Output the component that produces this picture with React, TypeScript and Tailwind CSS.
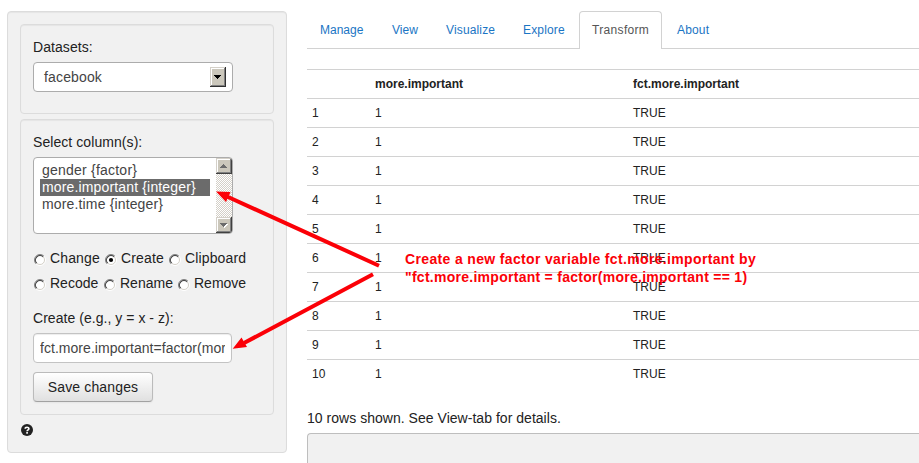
import React from "react";

const tabs = [
  { name: "Manage", width: "w-[70px]" },
  { name: "View", width: "w-[52px]" },
  { name: "Visualize", width: "w-[75px]" },
  { name: "Explore", width: "w-[67px]" },
  { name: "Transform", width: "w-[83px]" },
  { name: "About", width: "w-[60px]" },
];
const rows = [1, 2, 3, 4, 5, 6, 7, 8, 9, 10];

function Well({ className = "", children }: { className?: string; children: React.ReactNode }) {
  return (
    <div className={`rounded-[4px] border border-[#dcdcdc] bg-[#f1f1f1] p-3 shadow-[inset_0_1px_1px_rgba(0,0,0,0.05)] ${className}`}>
      {children}
    </div>
  );
}

function ScrollButton({ up = false }: { up?: boolean }) {
  return (
    <svg width="16" height="16" viewBox="0 0 16 16" shapeRendering="crispEdges" className="block">
      <rect width="16" height="16" fill="#404040" />
      <rect width="15" height="15" fill="#d4d0c8" />
      <rect x="1" y="1" width="14" height="14" fill="#808080" />
      <rect x="1" y="1" width="13" height="13" fill="#fff" />
      <rect x="2" y="2" width="12" height="12" fill="#cbc7bb" />
      {up ? (
        <path d="M7 6h1v1h1v1h1v1h1v1H4V9h1V8h1V7h1z" fill="#6b6b6b" />
      ) : (
        <>
          <path d="M5 7h7v1h-1v1h-1v1H9v1H8v-1H7V9H6V8H5z" fill="#fff" />
          <path d="M4 6h7v1h-1v1H9v1H8v1H7V9H6V8H5V7H4z" fill="#6b6b6b" />
        </>
      )}
    </svg>
  );
}

function Radio({ label, checked = false, className = "" }: { label: string; checked?: boolean; className?: string }) {
  return (
    <div className={`flex shrink-0 items-start gap-1 ${className}`}>
      <svg width="12" height="12" viewBox="0 0 12 12" className="mt-[6px] shrink-0">
        <circle cx="6" cy="6" r="5" fill="#fff" />
        <path d="M2.1 9.9A5.5 5.5 0 0 1 9.9 2.1" fill="none" stroke="#808080" strokeWidth="1" />
        <path d="M2.8 9.2A4.5 4.5 0 0 1 9.2 2.8" fill="none" stroke="#404040" strokeWidth="1.1" />
        <path d="M9.9 2.1A5.5 5.5 0 0 1 2.1 9.9" fill="none" stroke="#fff" strokeWidth="1" />
        <path d="M9.2 2.8A4.5 4.5 0 0 1 2.8 9.2" fill="none" stroke="#d4d0c8" strokeWidth="1" />
        {checked && <circle cx="6" cy="6" r="2.1" fill="#000" />}
      </svg>
      <span>{label}</span>
    </div>
  );
}

function Sidebar() {
  return (
    <aside className="mt-[11px] ml-[7px] h-[442px] w-[280px] shrink-0 rounded-[4px] border border-[#dcdcdc] bg-[#f1f1f1] p-3 shadow-[inset_0_1px_1px_rgba(0,0,0,0.05)]">
      <Well className="h-[90px] w-[254px]">
        <div className="tracking-[0.07px]">Datasets:</div>
        <div className="mt-[5px] flex h-[30px] w-[200px] items-center justify-between rounded-[4px] border border-[#acacac] bg-white pr-[6px] pl-[10px] text-[#444]">
          <span className="tracking-[0.15px]">facebook</span>
          <svg width="16" height="20" viewBox="0 0 16 20" shapeRendering="crispEdges">
            <rect width="16" height="20" fill="#303030" />
            <rect width="15" height="19" fill="#d4d0c8" />
            <rect x="1" y="1" width="14" height="18" fill="#808080" />
            <rect x="1" y="1" width="13" height="17" fill="#fff" />
            <rect x="2" y="2" width="12" height="16" fill="#cbc7bb" />
            <path d="M4 8h7v1h-1v1H9v1H8v1H7v-1H6v-1H5V9H4z" fill="#000" />
          </svg>
        </div>
      </Well>
      <Well className="mt-[5px] h-[296px] w-[254px]">
        <div className="tracking-[0.07px]">Select column(s):</div>
        <div className="mt-[5px] flex h-[77px] w-[200px] justify-between overflow-hidden rounded-[4px] border border-[#acacac] bg-white text-[#444]">
          <div className="mt-[4px] ml-[6px] w-[170px] leading-[17px] tracking-[0.15px]">
            <div className="pl-[2px] tracking-[0.22px]">gender {"{factor}"}</div>
            <div className="bg-[#6b6b6b] pl-[2px] text-white">more.important {"{integer}"}</div>
            <div className="pl-[2px]">more.time {"{integer}"}</div>
          </div>
          <div className="flex w-4 flex-col justify-between bg-[repeating-conic-gradient(#d4d0c8_0_25%,#fff_0_50%)] bg-[length:2px_2px]">
            <ScrollButton up />
            <ScrollButton />
          </div>
        </div>
        <div className="mt-[14px] flex h-5 pl-px tracking-[0.14px]">
          <Radio label="Change" className="w-[71px]" />
          <Radio label="Create" checked className="w-[64px]" />
          <Radio label="Clipboard" />
        </div>
        <div className="mt-[5px] flex h-5 pl-px">
          <Radio label="Recode" className="w-[70px]" />
          <Radio label="Rename" className="w-[74px]" />
          <Radio label="Remove" />
        </div>
        <div className="mt-[15px] tracking-[0.04px]">Create (e.g., y = x - z):</div>
        <div className="mt-[5px] h-[30px] w-[199px] rounded-[4px] border border-[#c3c3c3] bg-white px-[6px] py-[4px] text-[#444] shadow-[inset_0_1px_1px_rgba(0,0,0,0.075)]">
          <div className="overflow-hidden tracking-[0.04px] whitespace-nowrap">fct.more.important=factor(mor</div>
        </div>
        <button className="mt-[9px] block h-[30px] w-[120px] rounded-[4px] border border-[#bbb] border-b-[#a2a2a2] bg-linear-to-b from-white to-[#e0e0e0] text-center tracking-[0.14px] shadow-[0_1px_2px_rgba(0,0,0,0.05)]">
          Save changes
        </button>
      </Well>
      <svg width="12" height="12" viewBox="0 0 14 14" className="mt-[9px] ml-px block">
        <circle cx="7" cy="7" r="7" fill="#222" />
        <path d="M4.9 5.4C4.9 3.2 9.2 3.2 9.2 5.4C9.2 6.8 7.1 6.8 7.1 8.4" fill="none" stroke="#fff" strokeWidth="1.9" />
        <rect x="6.1" y="9.4" width="2" height="1.9" fill="#fff" />
      </svg>
    </aside>
  );
}

function Main() {
  return (
    <main className="mt-[11px] ml-5 min-w-0 flex-1">
      <nav className="flex h-[38px] gap-[2px] border-b border-[#d2d2d2] text-[12px]">
        {tabs.map(({ name, width }) => (
          <div
            key={name}
            className={`${width} shrink-0 ${
              name === "Transform"
                ? "h-[38px] rounded-t-[4px] border border-b-0 border-[#d2d2d2] bg-white pt-[8px] pl-3 tracking-[0.33px] text-[#555]"
                : name === "Visualize" || name === "Explore" || name === "About"
                  ? "pt-[9px] pl-[13px] tracking-[0.15px] text-[#1a75c4]"
                  : "pt-[9px] pl-[13px] text-[#1a75c4]"
            }`}
          >
            {name}
          </div>
        ))}
      </nav>
      <table className="mt-5 w-full table-fixed border-collapse text-left text-[12px]">
        <thead>
          <tr className="h-[29px] border-t border-[#d2d2d2]">
            <th className="w-[63px] p-0" />
            <th className="w-[258px] px-[5px] py-0">more.important</th>
            <th className="px-[5px] py-0">fct.more.important</th>
          </tr>
        </thead>
        <tbody>
          {rows.map((n) => (
            <tr key={n} className="h-[29px] border-t border-[#d2d2d2]">
              <td className="px-[5px] py-0">{n}</td>
              <td className="px-[5px] py-0">1</td>
              <td className="px-[5px] py-0">TRUE</td>
            </tr>
          ))}
        </tbody>
      </table>
      <div className="mt-[19px] tracking-[0.03px]">10 rows shown. See View-tab for details.</div>
      <div className="mt-[5px] h-[50px] rounded-tl-[4px] border-t border-l border-[#bebebe] bg-[#f1f1f1]" />
    </main>
  );
}

export default function App() {
  return (
    <div className="relative flex h-[463px] w-[919px] overflow-hidden bg-white font-['Liberation_Sans',Arial,sans-serif] text-[14px] leading-5 text-[#222]">
      <Sidebar />
      <Main />
      <svg className="absolute inset-0" width="919" height="463" viewBox="0 0 919 463" fill="#fb0007" stroke="#fb0007">
        <path d="M379 265.7L227 196.5M373 274.3L244 343" strokeWidth="4" fill="none" />
        <path d="M216 191.5L230.5 192L226 202ZM232.7 348.8L241.5 337.6L247 347Z" stroke="none" />
      </svg>
      <div className="absolute top-[250px] left-[405px] text-[14px] leading-[18px] font-bold whitespace-nowrap text-[#fb0007]">
        <div className="tracking-[0.345px]">Create a new factor variable fct.more.important by</div>
        <div className="tracking-[0.27px]">"fct.more.important = factor(more.important == 1)</div>
      </div>
    </div>
  );
}
